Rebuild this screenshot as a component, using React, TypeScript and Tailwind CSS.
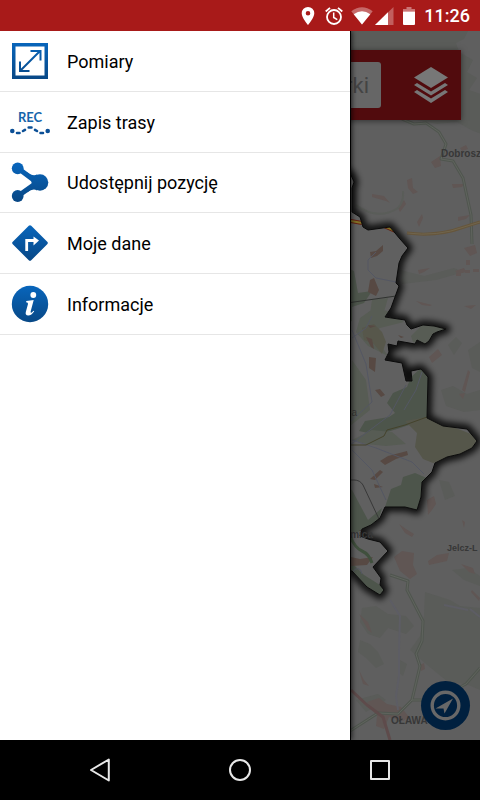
import React from 'react';

const REGION =
  'M300 150 L351 175 L354 182 L352 188 L352 212 L360 217 L363 227 L368 230 L390 227 L400 239 L408 248 L402 256 L399 263 L396 283 L399 286 L395 297 L391 308 L385 317 L405 320 L407 325 L411 329 L423 325 L434 326 L446 329 L437 332 L433 334 L429 341 L425 344 L417 340 L415 344 L398 341 L397 346 L388 344 L389 352 L385 360 L402 363 L406 381 L412 381 L411 371 L421 369 L428 377 L427 418 L443 426 L467 429 L477 441 L472 448 L460 454 L447 457 L435 463 L432 472 L422 482 L421 497 L417 510 L405 507 L385 507 L380 518 L371 525 L362 529 L360 536 L368 539 L380 542 L388 551 L373 567 L381 578 L380 585 L384 590 L380 595 L367 587 L352 571 L300 560 Z';

function RegionMap() {
  return (
    <svg
      viewBox="0 31 480 709"
      preserveAspectRatio="xMaxYMid slice"
      className="absolute inset-0 h-full w-full"
      fontFamily="'Liberation Sans', Arial, sans-serif"
      aria-label="Mapa"
    >
      <defs>
        <filter id="soft" x="-10%" y="-10%" width="120%" height="120%">
          <feGaussianBlur stdDeviation="3" />
        </filter>
        <clipPath id="region">
          <path d={REGION} />
        </clipPath>
      </defs>
      <rect y="31" width="480" height="709" fill="#5f5f5f" />

      {/* woodland and fields outside the region */}
      <g fill="#5a5c59">
        <path d="M340 31h128l-4 8-8 4 3 9 14 8-6 12 10 6-8 12 12 4v40l-10-4-14-8-20 2-30-6H340z" />
        <path d="M425 592l25 8 10 6 20 2v82l-14-6-18-2-22-18-16-14 10-14 4-20z" />
        <path d="M362 608l14-2 12 8 18 2 8 10-8 8-18-6-8 10-12-4-8-12zM360 640l10 4 8 8 6 12-8 4-10-10-8-6zM400 660l7 4-4 12-5-4z" />
        <path d="M448 345l8-8 6 6-8 12zM441 390l12-4 14 8 13-4v20l-16 2-18-6zM439 480l10 2 6 14-10 4zM468 350l12-8v30l-8-4zM400 270l24 6 30-8 10 4-28 8-34 4z" />
        <path d="M356 700l22-6 8 6-20 12zM452 570l16-2 12 8v10l-16-6z" />
      </g>
      <g fill="#605654">
        <path d="M372 194l12 2 6 7-4-2-14-4zM407 180l5-2 1 10 5 4-5 2-5-6zM398 208l6-8 2 4-6 8zM417 222l5-8 1 4-4 9zM431 162l9-6 1 10-6 2zM452 184h12l-2 3-9 1zM458 217l12-2-4 4-8 2zM460 148l6-3 2 4-6 2z" />
        <path d="M464 248l11-3 2 8-7 3zM418 270l12-2-6 4-5 2zM455 271l9-3 2 4-8 2zM416 301l16 4-2 1-8-1zM464 306l12-1-5 4zM429 357l9-8 4 6-10 8zM462 390l6-20 2 2-5 20zM459 394l6-1-2 6z" />
        <path d="M427 500l7-4 2 8-4 6-4 5zM428 561l9-6 12-2-2 8-18 4zM461 564l12 4 2 6-6-2zM399 524l7 5 8 5-2 3-7-4zM359 614l9 8 4 11-4-3zM462 520l3 2-1 6zM472 590l8 8-1 3-8-9z" />
        <path d="M394 557l8-6 12 2-1 12 4 9-7 5-10-8zM367 702l12-4 8 6 14 3 8 10-6 4-14-4-5 12-8-3 1-10zM420 665l4-2 1 6-4 2zM359 670l5 10 5 6-6-2z" />
        <path d="M456 273h5v3h-5zm9-3h5v3h-5zm8-1h6v3h-6zM466 260h4v5h-4z" />
      </g>
      <g fill="none" stroke="#5d5d64" strokeWidth="2">
        <path d="M390 600l10 16-1 34 0 26-3 20 2 14M470 609l10 8M444 605l24 5" />
        <path d="M356 205q22 16 42 3q6-6 5-17" stroke="#5a5d59" />
      </g>

      {/* roads */}
      <g fill="none" strokeLinejoin="round">
        <g stroke="#50564f" strokeWidth="3">
          <path d="M402 119l12 5 12-1 13 9 7 12-5 15 12 2 10 17 8 37 1 29" />
          <path d="M390 575l18 6-1 9 16 31-1 20-6 13 4 12-8 34-14 14-20-1-28 18M412 700h18M480 668l-14 16-20 10" />
        </g>
        <g stroke="#60645e" strokeWidth="1">
          <path d="M402 119l12 5 12-1 13 9 7 12-5 15 12 2 10 17 8 37 1 29" />
          <path d="M390 575l18 6-1 9 16 31-1 20-6 13 4 12-8 34-14 14-20-1-28 18M412 700h18M480 668l-14 16-20 10" />
        </g>
        <path d="M351 690l16 15 16 12 7 23" stroke="#5e4b4b" strokeWidth="3" />
        <path d="M407 233q30 4 57-6l16-5" stroke="#66563c" strokeWidth="3" />
        <path d="M407 233q30 4 57-6l16-5" stroke="#70654d" strokeWidth="1" />
      </g>

      {/* region with its halo */}
      <path d={REGION} fill="none" stroke="#000" strokeOpacity="0.85" strokeWidth="9" strokeLinejoin="round" filter="url(#soft)" />
      <path d={REGION} fill="#606060" />
      <g clipPath="url(#region)">
        <g fill="#4d554b">
          <path d="M340 265l14 6 4 22 14-2-8 12-12 4v14l-12 4z" />
          <path d="M421 368l8 9-2 42-30 10-20 6-18-4 6-10 24-4 6-4-8-10 6-10 14-6 4-10z" />
          <path d="M385 507l6-18 10-4 2-8 12-4 14 6-4 36zM340 484l12 6 16 30 14-12-4 14-20 10h-18z" />
          <path d="M352 378l5-4 2 16-6 4zM360 327l14 2-6 8-10-2zM350 561l14 14 16 10 5 6-4 6-32-22z" />
        </g>
        <g fill="#575c54">
          <path d="M360 318l14-10 18 4 12 10-24 6-10 8 14 14 4 6-20-10-12-14zM411 336l12-12 26 2-16 22-20-6zM372 300l16-2-4 14-14 2z" />
          <path d="M352 360l14 20 4 30-20 16zM352 440l20-10 20 2 14 12-20 2-20-2z" />
        </g>
        <path d="M405 421l22-4 52 20-12 20-34 6-10-4-8-12 2-14z" fill="#55564a" />
        <path d="M362 328l12-4 8 8 4 10-4 12-8-10-10-4z" fill="#57574b" />
        <g fill="#574943">
          <path d="M370 252l6-1 7-6v6l-6 5-6 2zM370 280l4-2 5 12-3 6-8-4zM369 357l7 1-1 14-6-4zM375 390l5-1 5 6-4 2zM380 461l8-5 19-5 1 4-12 4-11 6zM370 479l10-9 3 2-8 8zM374 484l9 3-8 1zM366 337l6 2 2 10-3-2zM351 557l9 2 13-2-6 8-16 1zM398 335l6 2-3 1zM368 325l8 1-6 2z" />
        </g>
        <g fill="none" stroke="#545763" strokeWidth="1">
          <path d="M376 252l-8 8 0 10 8 8 20 4M352 330l14 34 6 38-22 20M350 445l40-30 16-30M352 440l24 8 36 14 12 12M352 450l20 20 14 30M404 410l12-20 6-18M352 338l14-10 6-12M352 572q8-8 10 2" />
        </g>
        <path d="M340 304l56-8" stroke="#303330" strokeWidth="1" fill="none" />
        <path d="M340 480h14q6 0 9 5l16 34" stroke="#383838" strokeWidth="1" fill="none" />
        <path d="M350 445h16l18-9 3-6 18-5 22-8" stroke="#45432c" strokeWidth="1" fill="none" />
        <path d="M350 536q5 12 12 15t10 12" stroke="#40503d" strokeWidth="3" fill="none" />
        <path d="M340 219l22 4M384 226l18 8" stroke="#641f12" strokeWidth="4" />
        <path d="M340 219l22 4M384 226l18 8" stroke="#807126" strokeWidth="2" />
      </g>
      <path d={REGION} fill="none" stroke="#0b0b0b" strokeWidth="1" strokeLinejoin="round" />

      {/* place names */}
      <g fill="#373737" fontSize="10" fontWeight="700">
        <text x="441" y="157">Dobrosz</text>
        <text x="447" y="551" fontSize="9">Jelcz-L</text>
        <text x="373" y="538" textAnchor="end">mica</text>
        <text x="391" y="724">OŁAWA</text>
        <text x="357" y="416" textAnchor="end" fontWeight="400">a</text>
      </g>
    </svg>
  );
}

function StatusBar() {
  return (
    <header className="flex h-[31px] shrink-0 items-center justify-end bg-[#a81a19] pr-[10px] text-white">
      <svg width="14" height="18" viewBox="0 0 14 18" className="mr-[10px]" fill="currentColor">
        <path fillRule="evenodd" d="M7 0a6.3 6.3 0 0 0-6.3 6.3C.7 11 7 18 7 18s6.3-7 6.3-11.7A6.3 6.3 0 0 0 7 0zm0 4a2.3 2.3 0 1 1 0 4.600A2.3 2.300 0 0 1 7 4z" />
      </svg>
      <svg width="18" height="18" viewBox="0 0 18 18" className="mr-[8px]" fill="none" stroke="currentColor" strokeWidth="1.8">
        <circle cx="9" cy="10" r="7" />
        <path d="M.7 4.500L5 .9M17.300 4.500L13 .9" />
        <path d="M8.700 5.500v5l3.600 2.200" strokeWidth="1.500" />
      </svg>
      <svg width="22" height="18" viewBox="0 0 22 18" className="mr-[2px]" fill="currentColor">
        <path d="M11 17.500L.3 4.200Q11-3.800 21.700 4.200z" opacity=".35" />
        <path d="M11 17.500L2.700 7.200Q11 1.200 19.300 7.200z" />
      </svg>
      <svg width="19" height="18" viewBox="0 0 19 18" className="mr-[9px]" fill="currentColor">
        <path d="M0 18L18.500 0v18z" opacity=".3" />
        <path d="M0 18L13 5.300V18z" />
      </svg>
      <svg width="12" height="18" viewBox="0 0 12 18" className="mr-[9px]" fill="currentColor">
        <path d="M3.500 0h5v2H12v2.500H0V2h3.500z" opacity=".4" />
        <path d="M0 4.500h12V17q0 1-1 1H1q-1 0-1-1z" />
      </svg>
      <time className="text-[18px] leading-5 font-medium">11:26</time>
    </header>
  );
}

function MeasureIcon() {
  return (
    <svg width="40" height="40" viewBox="0 0 40 40" fill="none" stroke="url(#blue)">
      <rect x="3.750" y="3.750" width="32.500" height="32.500" strokeWidth="3.500" />
      <path d="M10.500 29.500L30 10M20.500 10H30.500V19.500M10 20.500V30H19.500" strokeWidth="2" />
    </svg>
  );
}

function RecordIcon() {
  return (
    <svg width="40" height="40" viewBox="0 0 40 40" fill="#0b4f96">
      <text x="20" y="20" textAnchor="middle" fontFamily="Lato, sans-serif" fontWeight="700" fontSize="13" fill="#1765ab">REC</text>
      <circle cx="2.300" cy="29" r="2.300" />
      <circle cx="37.700" cy="29" r="2.300" />
      <path d="M7 31h2.500M13 29l2-1.200M18.700 25.500h2.800M25 27.800l2 1.200M30.500 31h2.500" stroke="#0b4f96" strokeWidth="2.600" fill="none" strokeLinecap="round" />
    </svg>
  );
}

function ShareIcon() {
  return (
    <svg width="40" height="40" viewBox="0 0 40 40" fill="url(#blue)">
      <circle cx="7.700" cy="6.300" r="5.900" />
      <circle cx="30" cy="20.500" r="8.300" />
      <circle cx="7.700" cy="34" r="5.900" />
      <path d="M8 6.300L27 20.500L8 34" fill="none" stroke="url(#blue)" strokeWidth="5" />
      <path d="M17 10q6 5 10 2.500v16q-4-2.500-10 2l5-9.500z" />
    </svg>
  );
}

function DirectionIcon() {
  return (
    <svg width="40" height="40" viewBox="0 0 40 40">
      <path d="M20 4L36 20L20 36L4 20z" fill="url(#blue)" stroke="url(#blue)" strokeWidth="3.500" strokeLinejoin="round" />
      <path d="M15.300 28h2.800V19H23.500v3.500L29 17.500L23.500 13.500v2.500H15.300z" fill="#fff" />
    </svg>
  );
}

function InfoIcon() {
  return (
    <svg width="40" height="40" viewBox="0 0 40 40">
      <circle cx="20" cy="20" r="18.200" fill="url(#blue)" />
      <circle cx="23.300" cy="11" r="2.900" fill="#fff" />
      <path d="M16.300 17l7.400-1-3 11.300q-.4 1.700.6 1.400 1-.4 2.100-2l.8.600q-2.600 4.200-6 4.200-3.200 0-2.400-3.400l2.200-8q.4-1.800-1.900-1.900z" fill="#fff" />
    </svg>
  );
}

const ITEMS = [
  { label: 'Pomiary', Icon: MeasureIcon },
  { label: 'Zapis trasy', Icon: RecordIcon },
  { label: 'Udostępnij pozycję', Icon: ShareIcon },
  { label: 'Moje dane', Icon: DirectionIcon },
  { label: 'Informacje', Icon: InfoIcon },
];

function Drawer() {
  return (
    <nav className="relative w-[350px] max-w-[80%] bg-white shadow-[1px_0_0_#000,2px_0_5px_rgba(0,0,0,0.7)]">
      <svg width="0" height="0" className="absolute" aria-hidden="true">
        <linearGradient id="blue" gradientUnits="userSpaceOnUse" x1="0" y1="2" x2="0" y2="38">
          <stop offset="0" stopColor="#0865bb" />
          <stop offset="1" stopColor="#084886" />
        </linearGradient>
      </svg>
      <ul className="grid h-[304px] auto-rows-fr">
        {ITEMS.map(({ label, Icon }) => (
          <li key={label} className="border-b border-[#e6e6e6]">
            <button className="flex h-full w-full items-center gap-[17px] px-[10px] text-left text-[18px] leading-6 text-black">
              <Icon />
              <span className="pt-[2px]">{label}</span>
            </button>
          </li>
        ))}
      </ul>
    </nav>
  );
}

function MapToolbar() {
  return (
    <div className="absolute inset-x-[19px] top-[19px] flex h-[70px] items-center bg-[#510b0d] pr-[11px] shadow-[0_1px_6px_rgba(0,0,0,0.5)]">
      <input
        aria-label="Szukaj"
        defaultValue="rki"
        className="ml-3 h-[46px] min-w-0 flex-1 rounded-[3px] bg-[#666] pr-3 text-right text-[22px] text-[#444] outline-none"
      />
      <button aria-label="Warstwy" className="ml-[30px] flex w-[39px] justify-center">
        <svg width="36" height="38" viewBox="0 0 36 38" fill="#777">
          <path d="M18 1L35 11.500L18 22L1 11.500z" />
          <path d="M1 19L4 17L18 25.500L32 17L35 19L18 29.500z" />
          <path d="M1 26L4 24L18 32.500L32 24L35 26L18 37z" />
        </svg>
      </button>
    </div>
  );
}

function LocateButton() {
  return (
    <button aria-label="Moja pozycja" className="absolute right-[10px] bottom-[10px] size-[49px] rounded-full bg-[#00203f]">
      <svg viewBox="0 0 49 49" className="size-full">
        <circle cx="24.500" cy="24.500" r="13.300" fill="none" stroke="#686868" strokeWidth="3.400" />
        <path d="M32 17.500L23.500 32.500L22.500 27.500L14.500 27.500z" fill="#686868" />
      </svg>
    </button>
  );
}

function NavigationBar() {
  return (
    <footer className="grid h-[60px] shrink-0 grid-cols-3 bg-black px-[30px] text-[#e8e8e8]">
      <button aria-label="Wstecz" className="flex items-center justify-center">
        <svg width="24" height="24" viewBox="0 0 24 24" fill="none" stroke="currentColor" strokeWidth="2" strokeLinejoin="round">
          <path d="M20.800 1.500v21L3 12z" />
        </svg>
      </button>
      <button aria-label="Ekran główny" className="flex items-center justify-center">
        <svg width="24" height="24" viewBox="0 0 24 24" fill="none" stroke="currentColor" strokeWidth="2">
          <circle cx="12" cy="12" r="10" />
        </svg>
      </button>
      <button aria-label="Ostatnie aplikacje" className="flex items-center justify-center">
        <svg width="24" height="24" viewBox="0 0 24 24" fill="none" stroke="currentColor" strokeWidth="2" strokeLinejoin="round">
          <rect x="3" y="3" width="18" height="18" />
        </svg>
      </button>
    </footer>
  );
}

export default function App() {
  return (
    <div className="flex min-h-screen flex-col bg-black font-[Roboto,sans-serif]">
      <StatusBar />
      <main className="relative flex flex-1 overflow-hidden">
        <section className="absolute inset-0">
          <RegionMap />
          <MapToolbar />
          <LocateButton />
        </section>
        <Drawer />
      </main>
      <NavigationBar />
    </div>
  );
}
